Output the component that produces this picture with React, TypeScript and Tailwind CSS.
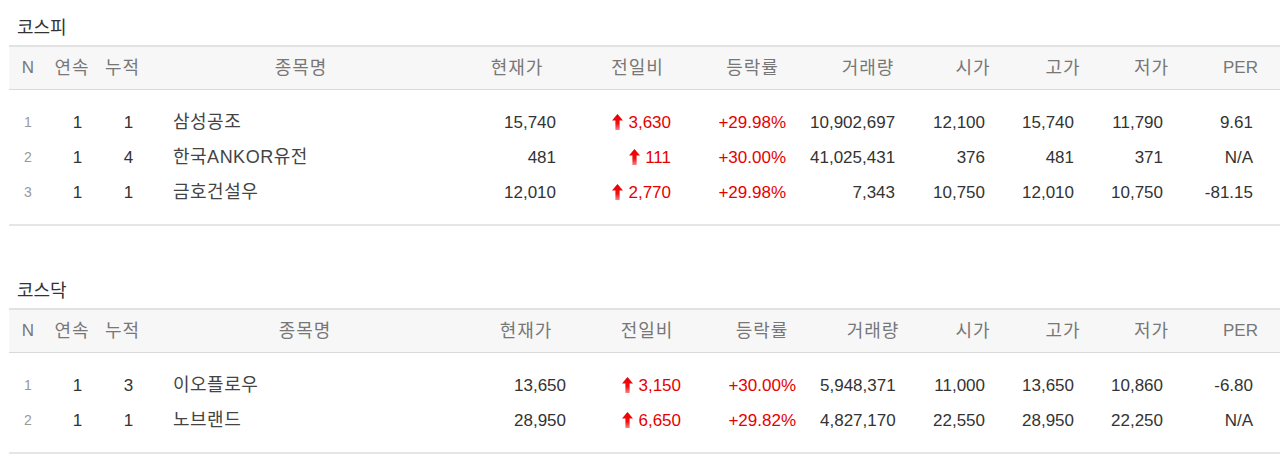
import React from "react";

type Row = {
  n: number;
  streak: number;
  total: number;
  name: string;
  price: string;
  diff: string;
  rate: string;
  volume: string;
  open: string;
  high: string;
  low: string;
  per: string;
};

const kospi: Row[] = [
  { n: 1, streak: 1, total: 1, name: "삼성공조", price: "15,740", diff: "3,630", rate: "+29.98%", volume: "10,902,697", open: "12,100", high: "15,740", low: "11,790", per: "9.61" },
  { n: 2, streak: 1, total: 4, name: "한국ANKOR유전", price: "481", diff: "111", rate: "+30.00%", volume: "41,025,431", open: "376", high: "481", low: "371", per: "N/A" },
  { n: 3, streak: 1, total: 1, name: "금호건설우", price: "12,010", diff: "2,770", rate: "+29.98%", volume: "7,343", open: "10,750", high: "12,010", low: "10,750", per: "-81.15" },
];

const kosdaq: Row[] = [
  { n: 1, streak: 1, total: 3, name: "이오플로우", price: "13,650", diff: "3,150", rate: "+30.00%", volume: "5,948,371", open: "11,000", high: "13,650", low: "10,860", per: "-6.80" },
  { n: 2, streak: 1, total: 1, name: "노브랜드", price: "28,950", diff: "6,650", rate: "+29.82%", volume: "4,827,170", open: "22,550", high: "28,950", low: "22,250", per: "N/A" },
];

const headers = ["N", "연속", "누적", "종목명", "현재가", "전일비", "등락률", "거래량", "시가", "고가", "저가", "PER"];

function UpArrow() {
  return (
    <svg width="11" height="16" viewBox="0 0 11 16" className="shrink-0 -mt-[2px]">
      <defs>
        <linearGradient id="ua" x1="0" y1="0" x2="0" y2="1">
          <stop offset="0" stopColor="#e60000" />
          <stop offset="0.6" stopColor="#f01010" />
          <stop offset="1" stopColor="#ff8080" />
        </linearGradient>
      </defs>
      <polygon points="5.5,0 11,6.5 7.6,6.5 7.6,16 3.4,16 3.4,6.5 0,6.5" fill="url(#ua)" />
    </svg>
  );
}

type Layout = {
  grid: string;
  pads: string[];
};

function StockTable({ title, rows, layout }: { title: string; rows: Row[]; layout: Layout }) {
  const p = layout.pads;
  return (
    <section>
      <div className="h-[45px] pl-[17px] pt-[17px] text-[18px] leading-[22px] text-[#333]">
        {title}
      </div>
      <div className="ml-[9px]">
        <div className={`grid ${layout.grid} h-[45px] items-center bg-[#f7f7f7] border-t-2 border-t-[#e2e2e2] border-b border-b-[#d9d9d9] text-[#777]`}>
          {headers.map((h, i) => (
            <div
              key={h}
              className={`text-center whitespace-nowrap ${i === 0 || i === 11 ? "text-[17px]" : "text-[18px] tracking-[1px]"}`}
            >
              {h}
            </div>
          ))}
        </div>
        <div className="pt-[15px] pb-[14px] border-b-2 border-b-[#e6e6e6]">
          {rows.map((r) => (
            <div key={r.n} className={`grid ${layout.grid} h-[35px] items-center text-[17px] text-[#333] whitespace-nowrap`}>
              <div className="text-center text-[14px] text-[#999]">{r.n}</div>
              <div className="text-center pl-[11px]">{r.streak}</div>
              <div className="text-center pl-[12px]">{r.total}</div>
              <div className="pl-[25px] text-[18px] tracking-[0.5px] text-[#444]">{r.name}</div>
              <div className={`text-right ${p[0]}`}>{r.price}</div>
              <div className={`flex justify-end items-center gap-[5px] text-[#e60000] ${p[1]}`}>
                <UpArrow />
                <span>{r.diff}</span>
              </div>
              <div className={`text-right text-[#e60000] ${p[2]}`}>{r.rate}</div>
              <div className={`text-right ${p[3]}`}>{r.volume}</div>
              <div className={`text-right ${p[4]}`}>{r.open}</div>
              <div className={`text-right ${p[5]}`}>{r.high}</div>
              <div className={`text-right ${p[6]}`}>{r.low}</div>
              <div className={`text-right ${p[7]}`}>{r.per}</div>
            </div>
          ))}
        </div>
      </div>
    </section>
  );
}

const layout1: Layout = {
  grid: "grid-cols-[38px_50px_51px_306px_126px_115px_115px_116px_94px_86px_91px_87px]",
  pads: ["pr-[24px]", "pr-[24px]", "pr-[24px]", "pr-[31px]", "pr-[35px]", "pr-[32px]", "pr-[34px]", "pr-[31px]"],
};

const layout2: Layout = {
  grid: "grid-cols-[38px_50px_51px_314px_128px_114px_116px_106px_94px_86px_91px_87px]",
  pads: ["pr-[24px]", "pr-[23px]", "pr-[24px]", "pr-[31px]", "pr-[35px]", "pr-[32px]", "pr-[34px]", "pr-[31px]"],
};

export default function App() {
  return (
    <div
      className="w-[1280px] h-[466px] overflow-hidden bg-white"
      style={{ fontFamily: '"Liberation Sans", "Noto Sans CJK KR", sans-serif' }}
    >
      <StockTable title="코스피" rows={kospi} layout={layout1} />
      <div className="h-[37px]" />
      <StockTable title="코스닥" rows={kosdaq} layout={layout2} />
    </div>
  );
}
